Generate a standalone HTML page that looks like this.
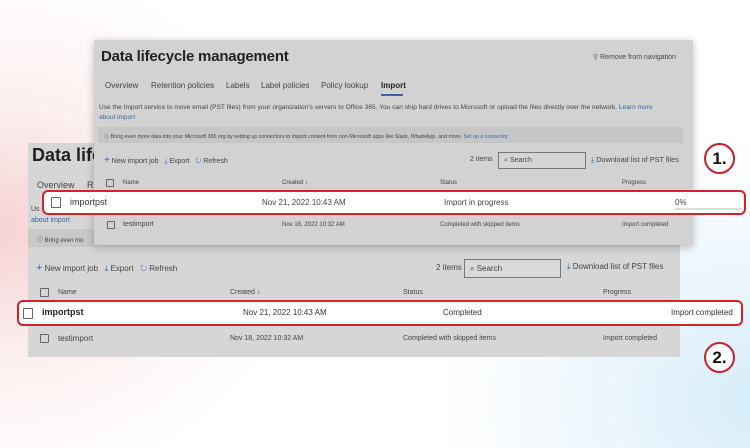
<!DOCTYPE html>
<html><head><meta charset="utf-8"><style>
*{margin:0;padding:0;box-sizing:border-box}
body{width:750px;height:448px;overflow:hidden;position:relative;font-family:"Liberation Sans",sans-serif;color:#333;
background:radial-gradient(ellipse 300px 260px at 0px 230px,#f6d3d4 0%,rgba(250,230,230,0.6) 50%,rgba(255,255,255,0) 100%),radial-gradient(ellipse 320px 260px at 760px 400px,#d5ecfa 0%,rgba(225,240,250,0.6) 50%,rgba(255,255,255,0) 100%),#fff}
.a{position:absolute;white-space:nowrap}
.panel{position:absolute;background:#d3d3d3}
.cb{position:absolute;width:9px;height:9px;border:1px solid #666;border-radius:1px}
.row{position:absolute;background:#fff;border:2px solid #d8202a;border-radius:6px}
.circ{position:absolute;width:31px;height:31px;border:2px solid #c8202a;border-radius:50%;background:#fff;font-weight:bold;font-size:17px;text-align:center;line-height:27px;color:#111}
.s{font-size:7px;color:#444}
.link{color:#3a64a8}
</style></head><body>
<div class="panel" style="left:28px;top:143px;width:652px;height:214px;background:#d6d6d6"></div>
<div class="a" style="left:32px;top:145px;font-size:18px;font-weight:bold;color:#222">Data lifec</div>
<div class="a" style="left:37px;top:180px;font-size:9px;color:#444">Overview</div>
<div class="a" style="left:87px;top:180px;font-size:9px;color:#444">Re</div>
<div class="a s" style="left:31px;top:206px">Us</div>
<div class="a s link" style="left:31px;top:217px">about import</div>
<div class="a" style="left:28px;top:229px;width:70px;height:18px;background:#c8c8c8"></div>
<div class="a" style="left:37px;top:235px;font-size:6px;color:#444">ⓘ Bring even mo</div>
<div class="a" style="left:36px;top:262px;font-size:8px;color:#444"><span style="color:#3a64a8;font-size:11px">+</span> New import job &nbsp; <span style="color:#3a64a8">⤓</span> Export &nbsp; <span style="color:#3a64a8">↻</span> Refresh</div>
<div class="a" style="left:436px;top:263px;font-size:8px;color:#444">2 items</div>
<div class="a" style="left:464px;top:259px;width:97px;height:19px;border:1px solid #777;background:#d9d9d9"></div>
<div class="a" style="left:470px;top:264px;font-size:8px;color:#444">⌕ Search</div>
<div class="a" style="left:567px;top:262px;font-size:8px;color:#444"><span style="color:#3a64a8">⤓</span> Download list of PST files</div>
<div class="cb" style="left:40px;top:288px"></div>
<div class="a s" style="left:58px;top:289px">Name</div>
<div class="a s" style="left:230px;top:289px">Created ↓</div>
<div class="a s" style="left:403px;top:289px">Status</div>
<div class="a s" style="left:603px;top:289px">Progress</div>
<div class="cb" style="left:40px;top:334px"></div>
<div class="a" style="left:58px;top:334px;font-size:8px;color:#444">testimport</div>
<div class="a s" style="left:230px;top:335px">Nov 18, 2022 10:32 AM</div>
<div class="a s" style="left:403px;top:335px">Completed with skipped items</div>
<div class="a s" style="left:603px;top:335px">Import completed</div>

<div class="panel" style="left:94px;top:40px;width:599px;height:205px;background:#d2d2d2;box-shadow:0 2px 8px rgba(0,0,0,0.25)"></div>
<div class="a" style="left:101px;top:48px;font-size:15px;font-weight:bold;color:#222;letter-spacing:-0.2px">Data lifecycle management</div>
<div class="a" style="left:593px;top:53px;font-size:7px;color:#444"><span style="color:#3a64a8">⚲</span> Remove from navigation</div>
<div class="a" style="left:105px;top:81px;font-size:8px;color:#444">Overview</div>
<div class="a" style="left:151px;top:81px;font-size:8px;color:#444">Retention policies</div>
<div class="a" style="left:226px;top:81px;font-size:8px;color:#444">Labels</div>
<div class="a" style="left:261px;top:81px;font-size:8px;color:#444">Label policies</div>
<div class="a" style="left:321px;top:81px;font-size:8px;color:#444">Policy lookup</div>
<div class="a" style="left:381px;top:81px;font-size:8px;color:#222;font-weight:bold">Import</div>
<div class="a" style="left:381px;top:94px;width:22px;height:2px;background:#3a64a8"></div>
<div class="a" style="left:99px;top:104px;font-size:6.5px;color:#444;letter-spacing:0.05px">Use the Import service to move email (PST files) from your organization's servers to Office 365. You can ship hard drives to Microsoft or upload the files directly over the network. <span class="link">Learn more</span></div>
<div class="a link" style="left:99px;top:114px;font-size:6.5px">about import</div>
<div class="a" style="left:98px;top:127px;width:585px;height:16px;background:#c6c6c6"></div>
<div class="a" style="left:104px;top:132px;font-size:5.3px;color:#444">ⓘ Bring even more data into your Microsoft 365 org by setting up connectors to import content from non-Microsoft apps like Slack, WhatsApp, and more. <span class="link">Set up a connector</span></div>
<div class="a" style="left:104px;top:155px;font-size:7px;color:#444"><span style="color:#3a64a8;font-size:10px">+</span> New import job &nbsp; <span style="color:#3a64a8">⤓</span> Export &nbsp; <span style="color:#3a64a8">↻</span> Refresh</div>
<div class="a" style="left:470px;top:156px;font-size:7px;color:#444">2 items</div>
<div class="a" style="left:498px;top:152px;width:88px;height:17px;border:1px solid #777;background:#d6d6d6"></div>
<div class="a" style="left:504px;top:157px;font-size:7px;color:#444">⌕ Search</div>
<div class="a" style="left:591px;top:155px;font-size:7.3px;color:#444"><span style="color:#3a64a8">⤓</span> Download list of PST files</div>
<div class="cb" style="left:106px;top:179px;width:8px;height:8px"></div>
<div class="a" style="left:123px;top:180px;font-size:6px;color:#444">Name</div>
<div class="a" style="left:282px;top:180px;font-size:6px;color:#444">Created ↓</div>
<div class="a" style="left:440px;top:180px;font-size:6px;color:#444">Status</div>
<div class="a" style="left:622px;top:180px;font-size:6px;color:#444">Progress</div>
<div class="cb" style="left:107px;top:221px;width:8px;height:8px"></div>
<div class="a" style="left:123px;top:221px;font-size:7px;color:#444">testimport</div>
<div class="a" style="left:282px;top:222px;font-size:6px;color:#444">Nov 18, 2022 10:32 AM</div>
<div class="a" style="left:440px;top:222px;font-size:6px;color:#444">Completed with skipped items</div>
<div class="a" style="left:622px;top:222px;font-size:6px;color:#444">Import completed</div>

<div class="row" style="left:42px;top:190px;width:704px;height:25px"></div>
<div class="cb" style="left:51px;top:197px;width:10px;height:11px"></div>
<div class="a" style="left:70px;top:197px;font-size:9px;color:#333">importpst</div>
<div class="a" style="left:262px;top:198px;font-size:8px;color:#444">Nov 21, 2022 10:43 AM</div>
<div class="a" style="left:444px;top:198px;font-size:8px;color:#444">Import in progress</div>
<div class="a" style="left:675px;top:198px;font-size:8px;color:#444">0%</div>
<div class="a" style="left:675px;top:208px;width:67px;height:2px;background:#ddd"></div>

<div class="row" style="left:17px;top:300px;width:726px;height:26px"></div>
<div class="cb" style="left:23px;top:308px;width:10px;height:11px"></div>
<div class="a" style="left:42px;top:307px;font-size:9px;font-weight:bold;color:#222">importpst</div>
<div class="a" style="left:243px;top:308px;font-size:8px;color:#333">Nov 21, 2022 10:43 AM</div>
<div class="a" style="left:443px;top:308px;font-size:8px;color:#333">Completed</div>
<div class="a" style="left:671px;top:308px;font-size:8px;color:#333">Import completed</div>

<div class="circ" style="left:704px;top:143px">1.</div>
<div class="circ" style="left:704px;top:342px">2.</div>
</body></html>
